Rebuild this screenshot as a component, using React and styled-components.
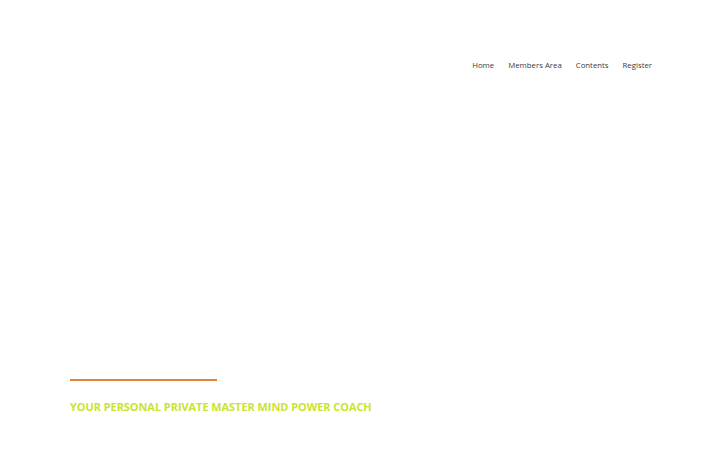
import React from 'react';
import styled, { createGlobalStyle } from 'styled-components';

const GlobalStyle = createGlobalStyle`
  html, body {
    margin: 0;
    padding: 0;
    background: #ffffff;
  }
  body {
    font-family: "Open Sans", "Liberation Sans", sans-serif;
  }
`;

const Page = styled.div`
  width: 720px;
  height: 450px;
  display: flex;
  flex-direction: column;
  overflow: hidden;
`;

const Header = styled.header`
  display: flex;
  justify-content: flex-end;
  padding: 59px 68px 0 0;
`;

const Nav = styled.nav`
  display: flex;
  gap: 14px;
`;

const NavLink = styled.a`
  font-size: 7.8px;
  color: #3a3a3a;
  text-decoration: none;
  line-height: 13px;
`;

const Hero = styled.section`
  flex: 1;
  display: flex;
  flex-direction: column;
  justify-content: flex-end;
  padding: 0 0 36px 70px;
`;

const Rule = styled.div`
  width: 147px;
  height: 2px;
  background: #e3843c;
  margin-bottom: 18px;
`;

const Tagline = styled.h2`
  margin: 0;
  font-family: "Open Sans", "Liberation Sans", sans-serif;
  font-weight: 700;
  font-size: 10.9px;
  line-height: 15px;
  color: #c9e42a;
`;

const links = ['Home', 'Members Area', 'Contents', 'Register'];

const App = () => {
  return (
    <Page>
      <GlobalStyle />
      <Header>
        <Nav>
          {links.map((l) => (
            <NavLink key={l} href="#">{l}</NavLink>
          ))}
        </Nav>
      </Header>
      <Hero>
        <Rule />
        <Tagline>YOUR PERSONAL PRIVATE MASTER MIND POWER COACH</Tagline>
      </Hero>
    </Page>
  );
};

export default App;
